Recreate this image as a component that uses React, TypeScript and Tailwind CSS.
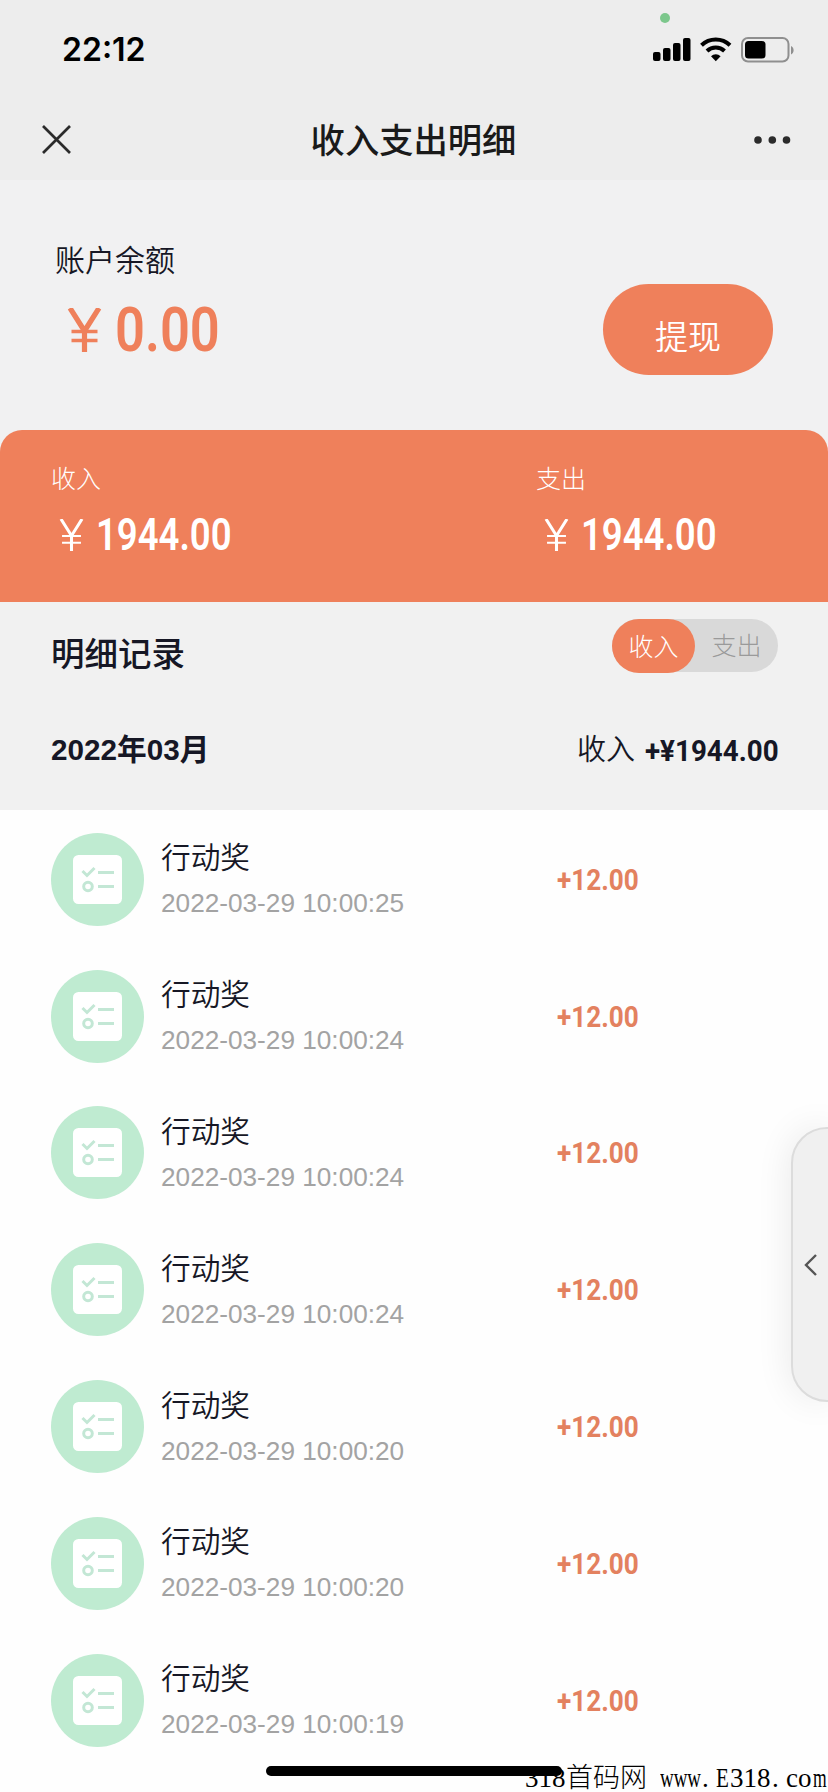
const records = [
  { name: "行动奖", time: "2022-03-29 10:00:25", amount: "+12.00" },
  { name: "行动奖", time: "2022-03-29 10:00:24", amount: "+12.00" },
  { name: "行动奖", time: "2022-03-29 10:00:24", amount: "+12.00" },
  { name: "行动奖", time: "2022-03-29 10:00:24", amount: "+12.00" },
  { name: "行动奖", time: "2022-03-29 10:00:20", amount: "+12.00" },
  { name: "行动奖", time: "2022-03-29 10:00:20", amount: "+12.00" },
  { name: "行动奖", time: "2022-03-29 10:00:19", amount: "+12.00" },
]

export default function App() {
  return (
    <div className="relative h-[1792px] w-[828px] overflow-hidden bg-[#fefefe] font-['Liberation_Sans','Noto_Sans_CJK_SC',sans-serif] text-[#161725]">
      <header className="h-[180px] bg-[#ededed]">
        <StatusBar />
        <NavBar />
      </header>

      <section className="flex h-[250px] justify-between bg-[#f1f1f2] pl-[55px] pr-[55px]">
        <div className="pt-[61px]">
          <div className="text-[30px] font-[350] leading-[40px]">账户余额</div>
          <div className="mt-[19px] flex h-[60px] items-center text-[#ef805b]">
            <Yen className="ml-[10px] h-[44px] w-[39px]" stroke={5.2} />
            <span className="ml-[11px] inline-block w-[102px] origin-left scale-x-[0.86] font-[Roboto,sans-serif] text-[61px] font-semibold leading-[60px]">
              0.00
            </span>
          </div>
        </div>
        <button className="mt-[104px] h-[91px] w-[170px] rounded-full bg-[#ef805b] pt-[17px] text-[33px] font-[350] leading-[40px] text-white">
          提现
        </button>
      </section>

      <div className="bg-[#f1f1f2]">
        <section className="flex h-[172px] rounded-t-[22px] bg-[#ef805b] pl-[51px] pt-[31px] text-white">
          <Total label="收入" value="1944.00" />
          <Total label="支出" value="1944.00" />
        </section>
      </div>

      <section className="h-[208px] bg-[#f1f1f1] pl-[51px] pr-[50px] pt-[17px]">
        <div className="flex justify-between">
          <h2 className="pt-[14px] text-[33.5px] font-medium leading-[44px]">明细记录</h2>
          <div className="flex h-[53px] w-[166px] items-center rounded-full bg-[#d9d9d9] text-[25px] font-light">
            <span className="h-[54px] w-[83px] rounded-full bg-[#ef805b] text-center leading-[56px] text-white">收入</span>
            <span className="w-[83px] text-center leading-[56px] text-[#9a9a9a]">支出</span>
          </div>
        </div>
        <div className="mt-[49px] flex h-[48px] items-center justify-between">
          <span className="text-[29.7px] font-bold">2022年03月</span>
          <div className="flex items-center">
            <span className="pt-[2px] text-[29px] font-[350]">收入</span>
            <span className="ml-[10px] inline-block w-[133px] origin-left scale-x-[0.925] whitespace-nowrap font-[Roboto,sans-serif] text-[30px] font-bold">
              +¥1944.00
            </span>
          </div>
        </div>
      </section>

      <ul className="pt-px">
        {records.map((r, i) => (
          <li key={i} className="flex h-[136.8px] items-center pl-[51px]">
            <TaskIcon />
            <div className="ml-[17px] w-[396px] pt-[4px]">
              <div className="text-[29.7px] font-[350] leading-[44px]">{r.name}</div>
              <div className="text-[26.2px] leading-[46px] text-[#a3a3a3]">{r.time}</div>
            </div>
            <span className="inline-block origin-left scale-x-[0.87] font-[Roboto,sans-serif] text-[30px] font-bold text-[#e3815f]">
              {r.amount}
            </span>
          </li>
        ))}
      </ul>

      {/* drawer handle on the right edge */}
      <div className="absolute right-[-2px] top-[1127px] flex h-[275px] w-[39px] items-center rounded-l-[36px] border-2 border-[#dcdcdc] bg-[#f0f0f0] pl-[9px] shadow-[0_0_36px_rgba(0,0,0,0.09)]">
        <svg width="16" height="24" viewBox="0 0 16 24" fill="none" stroke="#555" strokeWidth="2.4">
          <path d="M14 2 4 12l10 10" />
        </svg>
      </div>

      <Watermark />
      <div className="absolute left-[266px] top-[1766px] h-[10px] w-[296px] rounded-full bg-black" />
    </div>
  )
}

function StatusBar() {
  return (
    <div className="relative flex h-[100px] items-center justify-between pl-[62px] pr-[33px]">
      <span className="font-[Inter,sans-serif] text-[32px] font-semibold leading-[40px] text-black">22:12</span>
      <span className="absolute left-[660px] top-[13px] size-[10px] rounded-full bg-[#7cc78c]" />
      <svg width="142" height="26" viewBox="0 0 142 26">
        <rect x="0" y="15" width="7.5" height="9" rx="2" />
        <rect x="10" y="11" width="7.5" height="13" rx="2" />
        <rect x="20" y="6" width="7.5" height="18" rx="2" />
        <rect x="30" y="1" width="7.5" height="23" rx="2" />
        <g fill="none" stroke="#000" strokeWidth="4">
          <path d="M48.500 8.200a20.500 20.500 0 0 1 28.500 0" />
          <path d="M54 14a12.600 12.600 0 0 1 17.500 0" />
        </g>
        <path d="M58 19.200a7 7 0 0 1 9.600 0L62.800 24.200z" />
        <rect x="89" y="1" width="46.5" height="23.5" rx="6" fill="none" stroke="#8f8f8f" strokeWidth="2" />
        <rect x="92" y="4" width="20.5" height="17.5" rx="3.5" />
        <path d="M138 9v8.500c3.500-1.500 3.500-7 0-8.500z" fill="#8f8f8f" />
      </svg>
    </div>
  )
}

function NavBar() {
  return (
    <div className="flex h-[80px] items-center justify-between pb-[1px] pl-[40px] pr-[37px]">
      <svg width="33" height="33" viewBox="0 0 33 33" fill="none" stroke="#2b2b2b" strokeWidth="2.7">
        <path d="M3 3l27 27M30 3 3 30" />
      </svg>
      <h1 className="pt-[2px] text-[34.3px] font-medium leading-[40px] text-[#1a1a1a]">收入支出明细</h1>
      <svg width="37" height="8" viewBox="0 0 37 8" fill="#2b2b2b">
        <circle cx="4" cy="4" r="3.8" />
        <circle cx="18.3" cy="4" r="3.8" />
        <circle cx="32.5" cy="4" r="3.8" />
      </svg>
    </div>
  )
}

function Yen({ className, stroke }: { className: string; stroke: number }) {
  return (
    <svg className={className} viewBox="0 0 39 44" fill="none" stroke="currentColor" strokeWidth={stroke}>
      <path d="M5 0l14.500 23L34 0M19.500 22v22" />
      <path d="M6.500 23.500h26M6.500 32.500h26" strokeWidth={stroke * 0.65} />
    </svg>
  )
}

function Total({ label, value }: { label: string; value: string }) {
  return (
    <div className="w-[485px] shrink-0">
      <div className="text-[25px] font-light leading-[36px]">{label}</div>
      <div className="mt-[13px] flex h-[50px] items-center">
        <Yen className="ml-[6px] h-[32px] w-[29px]" stroke={4.2} />
        <span className="ml-[10px] inline-block origin-left scale-x-[0.83] font-[Roboto,sans-serif] text-[44px] font-semibold leading-[50px]">
          {value}
        </span>
      </div>
    </div>
  )
}

function TaskIcon() {
  return (
    <div className="flex size-[93px] shrink-0 items-center justify-center rounded-full bg-[#bfebd1]">
      <svg width="49" height="49" viewBox="0 0 49 49" fill="none" stroke="#c3e7d5" strokeWidth="3">
        <rect width="49" height="49" rx="5.5" fill="#fff" stroke="none" />
        <path d="M9.500 16l4.500 4.500L21.500 13M25 17.500h16M25 31.500h16" />
        <circle cx="15" cy="31.5" r="4.3" />
      </svg>
    </div>
  )
}

function Watermark() {
  return (
    <div className="absolute left-[525px] top-[1762px] flex h-[30px] w-[303px] whitespace-nowrap font-['Liberation_Serif','Noto_Sans_CJK_SC',serif] text-[27px] leading-[32px] text-black">
      <span className="w-[41px]">318</span>
      <span className="w-[94px] text-[27px] font-light leading-[32px]">首码网</span>
      <span className="w-[42px] origin-left scale-x-[0.7]">www</span>
      <span className="w-[14px]">.</span>
      <span className="w-[14px] origin-left scale-x-[0.78]">E</span>
      <span className="w-[42px]">318</span>
      <span className="w-[14px]">.</span>
      <span className="w-[27px]">co</span>
      <span className="w-[14px] origin-left scale-x-[0.65]">m</span>
    </div>
  )
}
